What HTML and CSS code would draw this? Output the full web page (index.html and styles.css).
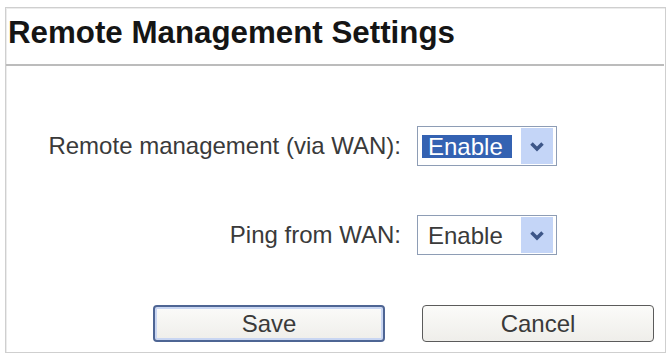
FILE: index.html
```html
<!DOCTYPE html>
<html>
<head>
<meta charset="utf-8">
<title>Remote Management Settings</title>
<link rel="stylesheet" href="styles.css">
</head>
<body>
<div class="frame">
  <h1 class="title">Remote Management Settings</h1>
  <div class="form">
    <div class="label">Remote management (via WAN):</div>
    <div class="select">
      <div class="value"><span class="hl">Enable</span></div>
      <div class="arrow"><svg width="16" height="11" viewBox="0 0 16 11"><path d="M2.5 2.5 L8 8 L13.5 2.5" fill="none" stroke="#3d5688" stroke-width="3.5"/></svg></div>
    </div>
    <div class="label">Ping from WAN:</div>
    <div class="select">
      <div class="value"><span class="plain">Enable</span></div>
      <div class="arrow"><svg width="16" height="11" viewBox="0 0 16 11"><path d="M2.5 2.5 L8 8 L13.5 2.5" fill="none" stroke="#3d5688" stroke-width="3.5"/></svg></div>
    </div>
  </div>
  <div class="buttons">
    <button class="btn btn-default">Save</button>
    <button class="btn">Cancel</button>
  </div>
</div>
</body>
</html>
```
FILE: styles.css
```css
html, body {
  margin: 0;
  padding: 0;
  background: #ffffff;
}
body {
  font-family: "Liberation Sans", Arial, sans-serif;
}
.frame {
  margin: 7px 5px 0 5px;
  height: 346px;
  box-sizing: border-box;
  border: 1px solid #cfcfcf;
  box-shadow: inset 1px 1px 0 #ececec;
}
.title {
  margin: 0;
  padding: 7px 0 13px 2px;
  font-size: 31.3px;
  line-height: 36px;
  font-weight: bold;
  color: #151515;
  border-bottom: 2px solid #bcbcbc;
  margin-right: 1px;
}
.form {
  display: grid;
  grid-template-columns: 395px 140px;
  column-gap: 16px;
  row-gap: 49px;
  padding-top: 60px;
  align-items: center;
}
.label {
  text-align: right;
  font-size: 24px;
  line-height: 40px;
  color: #3a3a3a;
}
.select {
  display: flex;
  width: 140px;
  height: 40px;
  box-sizing: border-box;
  border: 1px solid #8e9db5;
  padding: 1px 3px 1px 4px;
  background: #fff;
}
.value {
  flex: 1;
  display: flex;
  align-items: center;
  font-size: 24px;
}
.hl {
  display: block;
  width: 90px;
  height: 23px;
  line-height: 23px;
  box-sizing: border-box;
  padding-left: 6px;
  background: #3462b2;
  color: #ffffff;
}
.plain {
  padding-left: 6px;
  color: #3a3a3a;
  line-height: 23px;
}
.arrow {
  width: 32px;
  background: #c4d5f7;
  display: flex;
  align-items: center;
  justify-content: center;
}
.buttons {
  display: flex;
  gap: 37px;
  padding: 50px 0 0 147px;
}
.btn {
  width: 232px;
  height: 37px;
  box-sizing: border-box;
  border: 1.5px solid #5b5b5b;
  border-radius: 4px;
  background: linear-gradient(#fbfbf9, #efeeea);
  font-family: "Liberation Sans", Arial, sans-serif;
  font-size: 24px;
  color: #3a3a3a;
  padding: 0;
}
.btn-default {
  border: 2px solid #4e6594;
  box-shadow: inset 0 0 0 2px #c9d6f2;
}
```
